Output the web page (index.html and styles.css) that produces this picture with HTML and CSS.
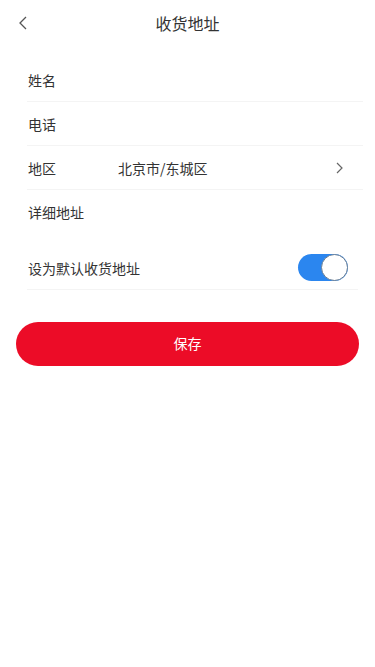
FILE: index.html
```html
<!DOCTYPE html>
<html lang="zh-CN">
<head>
    <meta charset="UTF-8">
    <meta name="viewport" content="width=device-width, initial-scale=1.0">
    <title>收货地址</title>
    <link rel="stylesheet" href="styles.css">
</head>
<body>
    <div class="nav-bar">
        <a class="nav-back">
            <svg width="10" height="14" viewBox="0 0 10 14"><path d="M8 1 L2 7 L8 13" fill="none" stroke="#555" stroke-width="1.3"/></svg>
        </a>
        <div class="nav-title">收货地址</div>
    </div>

    <div class="form">
        <div class="field">
            <div class="field-label">姓名</div>
            <div class="field-value"></div>
        </div>
        <div class="field">
            <div class="field-label">电话</div>
            <div class="field-value"></div>
        </div>
        <div class="field">
            <div class="field-label">地区</div>
            <div class="field-value">北京市/东城区</div>
            <svg class="arrow" width="9" height="12" viewBox="0 0 9 12"><path d="M2 1 L7 6 L2 11" fill="none" stroke="#666" stroke-width="1.2"/></svg>
        </div>
        <div class="field field-detail">
            <div class="field-label">详细地址</div>
            <div class="field-value"></div>
        </div>
        <div class="field field-switch">
            <div class="field-label">设为默认收货地址</div>
            <div class="switch on"><span class="switch-knob"></span></div>
        </div>
    </div>

    <div class="actions">
        <button class="btn-save">保存</button>
    </div>
</body>
</html>
```

FILE: styles.css
```css
body {
    margin: 0;
    padding: 0;
    background-color: #fff;
    color: #333;
    font-family: "Noto Sans CJK SC", "Noto Sans", sans-serif;
}

.nav-bar {
    height: 46px;
    display: flex;
    align-items: center;
    justify-content: center;
    position: relative;
}

.nav-back {
    position: absolute;
    left: 18px;
    top: 16px;
    display: flex;
}

.nav-title {
    font-size: 16px;
    color: #333;
}

.form {
    margin: 12px 12px 0 27px;
}

.field {
    display: flex;
    align-items: center;
    height: 43px;
    border-bottom: 1px solid #f4f4f4;
    font-size: 14px;
}

.field-label {
    width: 90px;
    padding-left: 1px;
    flex-shrink: 0;
}

.field-value {
    flex: 1;
}

.arrow {
    margin-right: 19px;
}

.field-detail {
    border-bottom: none;
    height: 44px;
    margin-bottom: 12px;
}

.field-switch {
    justify-content: space-between;
    margin-right: 5px;
}

.field-switch .field-label {
    width: auto;
}

.switch {
    width: 50px;
    height: 27px;
    border-radius: 14px;
    background-color: #2b86ef;
    position: relative;
    margin-right: 10px;
}

.switch-knob {
    position: absolute;
    right: 0;
    top: 0;
    width: 25px;
    height: 25px;
    border-radius: 50%;
    background: #fff;
    border: 1px solid #6a7f95;
}

.actions {
    padding: 32px 16px 0 16px;
}

.btn-save {
    width: 100%;
    height: 44px;
    border: none;
    border-radius: 22px;
    background-color: #ec0c27;
    color: #fff;
    font-size: 14px;
    font-family: inherit;
    padding: 0 0 2px 0;
}
```
